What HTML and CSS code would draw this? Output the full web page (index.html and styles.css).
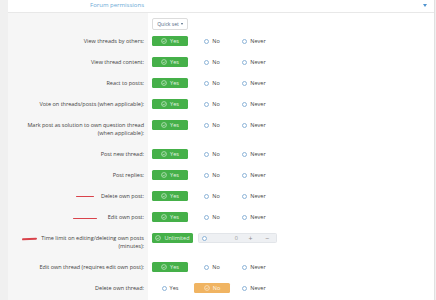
FILE: index.html
```html
<!DOCTYPE html>
<html>
<head>
    <meta charset="UTF-8">
    <title>Forum permissions</title>
    <link rel="stylesheet" href="styles.css">
</head>
<body>
    <div class="block">
        <div class="head">
            <div class="head-label">Forum permissions</div>
            <div class="head-right"><span class="head-caret"></span></div>
        </div>

        <div class="row row-quick">
            <div class="label"></div>
            <div class="ctrl">
                <span class="quick">Quick set <span class="caret-s"></span></span>
            </div>
        </div>

        <div class="row">
            <div class="label">View threads by others:</div>
            <div class="ctrl">
                <span class="opt"><span class="btn yes"><svg class="ico" viewBox="0 0 10 10"><circle cx="5" cy="5" r="4"/><path d="M3 5.2l1.4 1.4L7 4"/></svg>Yes</span></span>
                <span class="opt"><span class="radio"></span>No</span>
                <span class="opt"><span class="radio"></span>Never</span>
            </div>
        </div>

        <div class="row">
            <div class="label">View thread content:</div>
            <div class="ctrl">
                <span class="opt"><span class="btn yes"><svg class="ico" viewBox="0 0 10 10"><circle cx="5" cy="5" r="4"/><path d="M3 5.2l1.4 1.4L7 4"/></svg>Yes</span></span>
                <span class="opt"><span class="radio"></span>No</span>
                <span class="opt"><span class="radio"></span>Never</span>
            </div>
        </div>

        <div class="row">
            <div class="label">React to posts:</div>
            <div class="ctrl">
                <span class="opt"><span class="btn yes"><svg class="ico" viewBox="0 0 10 10"><circle cx="5" cy="5" r="4"/><path d="M3 5.2l1.4 1.4L7 4"/></svg>Yes</span></span>
                <span class="opt"><span class="radio"></span>No</span>
                <span class="opt"><span class="radio"></span>Never</span>
            </div>
        </div>

        <div class="row">
            <div class="label">Vote on threads/posts (when applicable):</div>
            <div class="ctrl">
                <span class="opt"><span class="btn yes"><svg class="ico" viewBox="0 0 10 10"><circle cx="5" cy="5" r="4"/><path d="M3 5.2l1.4 1.4L7 4"/></svg>Yes</span></span>
                <span class="opt"><span class="radio"></span>No</span>
                <span class="opt"><span class="radio"></span>Never</span>
            </div>
        </div>

        <div class="row">
            <div class="label">Mark post as solution to own question thread<br>(when applicable):</div>
            <div class="ctrl">
                <span class="opt"><span class="btn yes"><svg class="ico" viewBox="0 0 10 10"><circle cx="5" cy="5" r="4"/><path d="M3 5.2l1.4 1.4L7 4"/></svg>Yes</span></span>
                <span class="opt"><span class="radio"></span>No</span>
                <span class="opt"><span class="radio"></span>Never</span>
            </div>
        </div>

        <div class="row">
            <div class="label">Post new thread:</div>
            <div class="ctrl">
                <span class="opt"><span class="btn yes"><svg class="ico" viewBox="0 0 10 10"><circle cx="5" cy="5" r="4"/><path d="M3 5.2l1.4 1.4L7 4"/></svg>Yes</span></span>
                <span class="opt"><span class="radio"></span>No</span>
                <span class="opt"><span class="radio"></span>Never</span>
            </div>
        </div>

        <div class="row">
            <div class="label">Post replies:</div>
            <div class="ctrl">
                <span class="opt"><span class="btn yes"><svg class="ico" viewBox="0 0 10 10"><circle cx="5" cy="5" r="4"/><path d="M3 5.2l1.4 1.4L7 4"/></svg>Yes</span></span>
                <span class="opt"><span class="radio"></span>No</span>
                <span class="opt"><span class="radio"></span>Never</span>
            </div>
        </div>

        <div class="row">
            <div class="label"><span class="mark mark-del"></span>Delete own post:</div>
            <div class="ctrl">
                <span class="opt"><span class="btn yes"><svg class="ico" viewBox="0 0 10 10"><circle cx="5" cy="5" r="4"/><path d="M3 5.2l1.4 1.4L7 4"/></svg>Yes</span></span>
                <span class="opt"><span class="radio"></span>No</span>
                <span class="opt"><span class="radio"></span>Never</span>
            </div>
        </div>

        <div class="row">
            <div class="label"><span class="mark mark-edit"></span>Edit own post:</div>
            <div class="ctrl">
                <span class="opt"><span class="btn yes"><svg class="ico" viewBox="0 0 10 10"><circle cx="5" cy="5" r="4"/><path d="M3 5.2l1.4 1.4L7 4"/></svg>Yes</span></span>
                <span class="opt"><span class="radio"></span>No</span>
                <span class="opt"><span class="radio"></span>Never</span>
            </div>
        </div>

        <div class="row">
            <div class="label"><span class="mark mark-time"></span>Time limit on editing/deleting own posts<br>(minutes):</div>
            <div class="ctrl time">
                <span class="btn yes wide"><svg class="ico" viewBox="0 0 10 10"><circle cx="5" cy="5" r="4"/><path d="M3 5.2l1.4 1.4L7 4"/></svg>Unlimited</span>
                <span class="spin">
                    <span class="radio"></span>
                    <span class="spin-val">0</span>
                    <span class="step">+</span>
                    <span class="step">&minus;</span>
                </span>
            </div>
        </div>

        <div class="row">
            <div class="label">Edit own thread (requires edit own post):</div>
            <div class="ctrl">
                <span class="opt"><span class="btn yes"><svg class="ico" viewBox="0 0 10 10"><circle cx="5" cy="5" r="4"/><path d="M3 5.2l1.4 1.4L7 4"/></svg>Yes</span></span>
                <span class="opt"><span class="radio"></span>No</span>
                <span class="opt"><span class="radio"></span>Never</span>
            </div>
        </div>

        <div class="row">
            <div class="label">Delete own thread:</div>
            <div class="ctrl">
                <span class="opt"><span class="radio"></span>Yes</span>
                <span class="opt"><span class="btn no"><svg class="ico" viewBox="0 0 10 10"><circle cx="5" cy="5" r="4"/><path d="M3 5.2l1.4 1.4L7 4"/></svg>No</span></span>
                <span class="opt"><span class="radio"></span>Never</span>
            </div>
        </div>

        <div class="row filler">
            <div class="label"></div>
            <div></div>
        </div>
    </div>
</body>
</html>
```

FILE: styles.css
```css
*{
    box-sizing: border-box;
}

body{
    margin: 0;
    background: #f0f0f0;
    font-family: "Open Sans", "Noto Sans", sans-serif;
    font-size: 5.5px;
    color: #444;
    height: 300px;
    overflow: hidden;
}

.block{
    display: flex;
    flex-direction: column;
    margin-left: 8px;
    width: 427px;
    height: 300px;
    background: #fff;
    border-right: 1px solid #e0e0e0;
}

/* header */

.head{
    display: grid;
    grid-template-columns: 140px 1fr;
    height: 13px;
    flex-shrink: 0;
    border-bottom: 1px solid #e8e8e8;
}

.head-label{
    text-align: right;
    padding: 1px 4px 0 0;
    line-height: 8px;
    font-size: 6px;
    color: #6aa9d6;
}

.head-right{
    display: flex;
    justify-content: flex-end;
    padding: 4px 7px 0 0;
}

.head-caret{
    width: 0;
    height: 0;
    border-left: 2.5px solid transparent;
    border-right: 2.5px solid transparent;
    border-top: 3px solid #4f93cf;
}

/* rows */

.row{
    display: grid;
    grid-template-columns: 140px 1fr;
    flex-shrink: 0;
}

.label{
    background: #f6f6f6;
    text-align: right;
    padding: 6px 4px 7px 0;
    line-height: 8px;
    color: #3f3f3f;
}

.ctrl{
    display: flex;
    align-items: flex-start;
    gap: 6px;
    padding: 5px 0 0 4px;
}

.row-quick .label{
    padding: 0;
    height: 18px;
}

.quick{
    display: flex;
    align-items: center;
    justify-content: center;
    gap: 2px;
    width: 36px;
    height: 12px;
    border: 1px solid #dcdcdc;
    border-radius: 2px;
    font-size: 5px;
    color: #4b6580;
}

.caret-s{
    width: 0;
    height: 0;
    border-left: 1.5px solid transparent;
    border-right: 1.5px solid transparent;
    border-top: 2px solid #4b6580;
}

.opt{
    display: flex;
    align-items: center;
    justify-content: center;
    gap: 3px;
    width: 36px;
    height: 10px;
    color: #444;
}

.btn{
    display: flex;
    align-items: center;
    justify-content: center;
    gap: 3px;
    width: 36px;
    height: 10px;
    border-radius: 1.5px;
    color: #e4f4e4;
}

.yes{
    background: #45b049;
}

.no{
    background: #f0b462;
    color: #fff4e4;
}

.wide{
    width: 41px;
}

.ico{
    width: 6px;
    height: 6px;
    fill: none;
    stroke: currentColor;
    stroke-width: 1;
}

.radio{
    display: inline-block;
    width: 5px;
    height: 5px;
    border: 1px solid #8db4d8;
    border-radius: 50%;
    background: #fff;
}

.time{
    gap: 5px;
}

.spin{
    display: flex;
    align-items: center;
    width: 79px;
    height: 10px;
    padding-left: 3px;
    background: #eef0f3;
    border: 1px solid #e2e5e9;
    border-radius: 1.5px;
    color: #9a9a9a;
}

.spin-val{
    flex: 1;
    text-align: right;
    padding-right: 4px;
}

.step{
    width: 17px;
    text-align: center;
    font-size: 7px;
    color: #8a8a8a;
}

.filler{
    flex: 1;
}

/* red marks drawn on the screenshot */

.mark{
    display: inline-block;
    height: 1.5px;
    background: #d9434b;
    vertical-align: middle;
    border-radius: 1px;
}

.mark-del{
    width: 18px;
    margin-right: 7px;
}

.mark-edit{
    width: 24px;
    margin-right: 11px;
    position: relative;
    top: 1px;
}

.mark-time{
    width: 15px;
    margin-right: 4px;
    transform: rotate(-3deg);
}
```
